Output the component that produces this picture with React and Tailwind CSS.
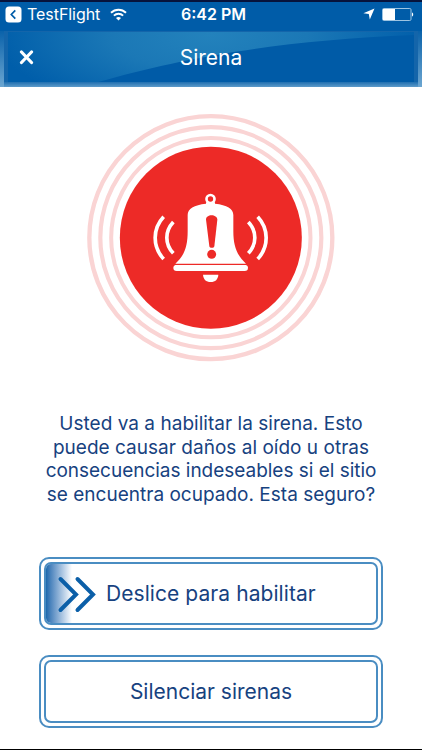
const messageLines = [
  { text: "Usted va a habilitar la sirena. Esto", tracking: "tracking-[0.03px]" },
  { text: "puede causar daños al oído u otras", tracking: "tracking-[0.02px]" },
  { text: "consecuencias indeseables si el sitio", tracking: "tracking-[-0.02px]" },
  { text: "se encuentra ocupado. Esta seguro?", tracking: "tracking-[0.01px]" },
];

function StatusBar() {
  return (
    <div className="grid h-[31px] grid-cols-[1fr_auto_1fr] items-center border-t-2 border-[#06133c] px-[5px] pb-[5px] text-white">
      <div className="flex items-center">
        <svg width="17" height="17" viewBox="0 0 17 17">
          <rect x="0.5" y="0.5" width="16" height="16" rx="3.5" fill="#fff" />
          <path d="M10.3 4.3 6.3 8.5l4 4.200" fill="none" stroke="#005ca8" strokeWidth="1.7" />
        </svg>
        <span className="ml-[5px] text-[16px] leading-none tracking-[-0.05px]">TestFlight</span>
        <svg className="ml-[10px]" width="17" height="13" viewBox="0 0 17 13" fill="none" stroke="#fff" strokeWidth="2">
          <path d="M1 4.7C5.2.6 11.8.6 16 4.7" />
          <path d="M3.9 7.6c2.6-2.5 6.6-2.5 9.2 0" />
          <path d="M8.5 12.5 6 9.9c1.4-1.3 3.6-1.3 5 0z" fill="#fff" stroke="none" />
        </svg>
      </div>
      <span className="ml-[5px] text-[16px] font-semibold leading-none">6:42 PM</span>
      <div className="flex items-center justify-end">
        <svg width="12" height="12" viewBox="0 0 12 12">
          <path d="M11.5.5 6.8 11.6 5.8 6.1.4 5.2z" fill="#fff" />
        </svg>
        <svg className="ml-[7px] mr-[3px]" width="32" height="13" viewBox="0 0 32 13">
          <rect x="0.5" y="0.5" width="28.5" height="12" rx="1.2" fill="none" stroke="#9dc4e2" />
          <rect x="1" y="1" width="12" height="11" fill="#fff" />
          <path d="M30 4.5c1.6.4 1.6 3.6 0 4z" fill="#fff" />
        </svg>
      </div>
    </div>
  );
}

function Header() {
  return (
    <header className="relative h-[56px] overflow-hidden">
      {/* glossy panel with a lighter rim */}
      <svg className="absolute inset-0" width="422" height="56" viewBox="0 0 422 56">
        <defs>
          <linearGradient id="rim" x1="0" y1="0" x2="0" y2="1">
            <stop offset="0" stopColor="#0a62aa" />
            <stop offset="1" stopColor="#6ca6d1" />
          </linearGradient>
          <linearGradient id="bottomRim" x1="0" y1="0" x2="0" y2="1">
            <stop offset="0" stopColor="#1f6fb0" />
            <stop offset="1" stopColor="#5e9bca" />
          </linearGradient>
          <radialGradient id="gloss" gradientUnits="userSpaceOnUse" cx="0" cy="0" r="1" gradientTransform="translate(210 4) scale(215 80)">
            <stop offset="0" stopColor="#2382bc" />
            <stop offset="0.45" stopColor="#1b78b6" />
            <stop offset="1" stopColor="#005eaa" />
          </radialGradient>
        </defs>
        <rect width="422" height="56" fill="url(#rim)" />
        <path d="M4 0H418V54H4z" fill="#1465aa" />
        <path d="M4 51H418V56H4z" fill="url(#bottomRim)" />
        <path d="M8 1H414V51H8z" fill="#005ba7" />
        <path d="M8 1H414V4C270 10 180 28 98 51H8z" fill="url(#gloss)" />
      </svg>
      <div className="relative grid h-[53px] grid-cols-[60px_1fr_60px] items-center text-white">
        <button className="pl-[19px]" aria-label="Cerrar">
          <svg width="16" height="16" viewBox="0 0 16 16" stroke="#fff" strokeWidth="3.2" strokeLinecap="round">
            <path d="M2.5 2 12.500 12.500M12.500 2 2.5 12.500" />
          </svg>
        </button>
        <h1 className="text-center text-[21px] leading-none">Sirena</h1>
      </div>
    </header>
  );
}

function SirenIcon() {
  return (
    <svg width="260" height="265" viewBox="0 0 780 795">
      <g fill="none" stroke="#fad4d4">
        <circle cx="392.5" cy="398" r="364.5" strokeWidth="13" />
        <circle cx="392.5" cy="398" r="331.5" strokeWidth="12.5" />
        <circle cx="392.5" cy="398" r="299" strokeWidth="12" />
      </g>
      <circle cx="392.5" cy="398" r="273" fill="#ed2a27" />
      <g fill="none" stroke="#fff">
        <circle cx="391.5" cy="282" r="12" strokeWidth="8" />
        <path d="M251 335C217 371 217 426 251 462" strokeWidth="11" />
        <path d="M280 351C254 379 254 417 280 445" strokeWidth="11" />
        <path d="M533 335C567 371 567 426 533 462" strokeWidth="11" />
        <path d="M505 351C531 379 531 417 505 445" strokeWidth="11" />
      </g>
      <g fill="#fff">
        <path d="M378 292h27v4c36 4 55 15 55 34v48c0 46 11 73 38 98H286c28-25 37-52 37-98v-48c0-19 19-30 55-34z" />
        <path d="M286 480h212q6 2 6 8.500q0 9.500-10 9.500H290q-10 0-10-9.500q0-6.500 6-8.500z" />
        <path d="M369 509h46c-1 14-9 22-23 22s-22-8-23-22z" />
      </g>
      <g fill="#ed2a27">
        <path d="M378 344c-1-18 34-18 34 0l-9 80c-1 6-14 6-15 0z" />
        <circle cx="395" cy="448" r="13.500" />
      </g>
    </svg>
  );
}

function FramedButton({ children }) {
  return (
    <button className="block h-[73px] w-[344px] rounded-[10px] border-2 border-[#4a8dc2] bg-white p-[3px]">
      <span className="flex h-full w-full items-center overflow-hidden rounded-[7px] border-2 border-[#4a8dc2] text-[21px] leading-none text-[#17427f]">
        {children}
      </span>
    </button>
  );
}

export default function App() {
  return (
    <div className="flex h-[750px] w-[422px] flex-col overflow-hidden border-b border-black bg-white font-['Inter','Liberation_Sans',sans-serif]">
      <div className="bg-[#005ca8]">
        <StatusBar />
        <Header />
      </div>
      <main className="flex flex-col items-center">
        <div className="mt-[18px] mr-[2px]">
          <SirenIcon />
        </div>
        <p className="mt-[42px] text-center text-[19px] leading-[23.7px] text-[#17427f]">
          {messageLines.map((line) => (
            <span key={line.text} className={`block whitespace-nowrap ${line.tracking}`}>
              {line.text}
            </span>
          ))}
        </p>
        <div className="mt-[50px] flex flex-col gap-[25px]">
          <FramedButton>
            <span className="flex h-full w-[26px] shrink-0 items-center bg-linear-to-r from-[#1c69ad] to-white">
              <svg className="mt-[2px] ml-[12px] shrink-0 overflow-visible" width="38" height="35" viewBox="0 0 38 35" fill="none" stroke="#0b5fa8" strokeWidth="4" strokeLinecap="round" strokeLinejoin="miter">
                <path d="M2.500 2 18 17.500 2.500 33M19.500 2 35 17.500 19.500 33" />
              </svg>
            </span>
            <span className="mt-px ml-[34px] whitespace-nowrap tracking-[0.07px]">Deslice para habilitar</span>
          </FramedButton>
          <FramedButton>
            <span className="w-full whitespace-nowrap text-center">Silenciar sirenas</span>
          </FramedButton>
        </div>
      </main>
    </div>
  );
}
